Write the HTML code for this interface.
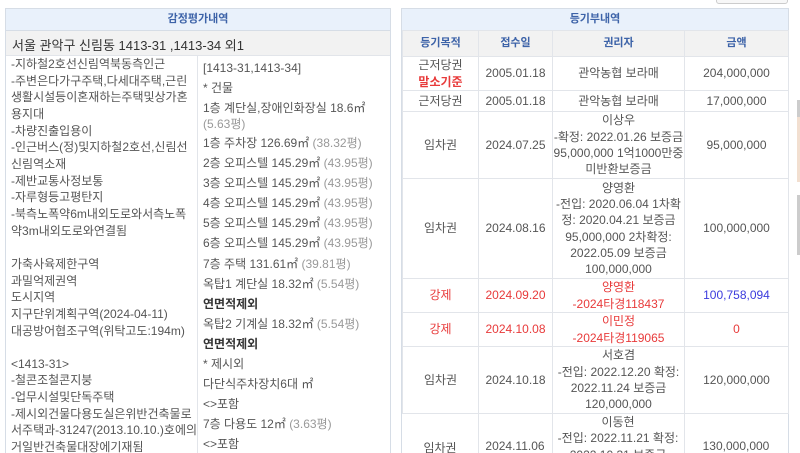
<!DOCTYPE html>
<html style="width:800px;height:453px;overflow:hidden"><head><meta charset="utf-8"><style>
*{margin:0;padding:0;box-sizing:border-box}
body{width:800px;height:453px;overflow:hidden;background:#fff;font-family:"Liberation Sans","Noto Sans CJK KR",sans-serif;font-size:12px;color:#555;position:relative}
.a{position:absolute;white-space:nowrap}
.box{position:absolute;border:1px solid #d6dde6;border-bottom:none}
.tt{position:absolute;background:#e9f1fb;color:#3d63a8;font-weight:bold;text-align:center;font-size:11px;line-height:21px;border-bottom:1px solid #d6dde6}
.g{color:#999}
.wrap{position:absolute;left:0;top:0;width:800px;height:453px;overflow:hidden}
table{position:absolute;left:402px;top:30px;width:386px;border-collapse:collapse;table-layout:fixed}
td,th{border:1px solid #e2e5ea;text-align:center;vertical-align:middle;line-height:16.3px;font-weight:normal;color:#555;padding:0}
th{background:#f2f2f2;color:#3d63a8;font-weight:bold;font-size:11px;height:26px}
.r{color:#e83a3a}
</style></head><body><div class="wrap">
<div style="position:absolute;left:716px;top:-4px;width:72px;height:8px;border:1px solid #ccc;border-radius:3px;background:#f7f7f7"></div>
<div style="position:absolute;left:797px;top:100px;width:3px;height:20px;background:#ccc"></div>
<div style="position:absolute;left:797px;top:117px;width:3px;height:65px;background:#f2dfd0"></div>
<div style="position:absolute;left:797px;top:195px;width:3px;height:60px;background:#ccc"></div>

<div class="box" style="left:5px;top:8px;width:386px;height:445px"></div>
<div class="tt" style="left:6px;top:9px;width:384px">감정평가내역</div>
<div class="a" style="left:6px;top:31px;width:384px;height:25px;background:#f2f2f2;border-bottom:1px solid #e2e5ea"></div>
<div class="a" style="left:12px;top:35px;font-size:13px;color:#333">서울 관악구 신림동 1413-31 ,1413-34 외1</div>
<div style="position:absolute;left:197px;top:56px;width:1px;height:397px;background:#e2e5ea"></div>
<div class="a" style="left:11px;top:56px;line-height:16.65px">-지하철2호선신림역북동측인근<br>-주변은다가구주택,다세대주택,근린<br>생활시설등이혼재하는주택및상가혼<br>용지대<br>-차량진출입용이<br>-인근버스(정)및지하철2호선,신림선<br>신림역소재<br>-제반교통사정보통<br>-자루형등고평탄지<br>-북측노폭약6m내외도로와서측노폭<br>약3m내외도로와연결됨<br><br>가축사육제한구역<br>과밀억제권역<br>도시지역<br>지구단위계획구역(2024-04-11)<br>대공방어협조구역(위탁고도:194m)<br><br>&lt;1413-31&gt;<br>-철콘조철콘지붕<br>-업무시설및단독주택<br>-제시외건물다용도실은위반건축물로<br>서주택과-31247(2013.10.10.)호에의<br>거일반건축물대장에기재됨</div>
<div class="a" style="left:203px;top:58px;line-height:20.1px">[1413-31,1413-34]<br>* 건물<br>1층 계단실,장애인화장실 18.6㎡</div>
<div class="a g" style="left:203px;top:115px">(5.63평)</div>
<div class="a" style="left:203px;top:133px;line-height:20.1px">1층 주차장 126.69㎡ <span class="g">(38.32평)</span><br>2층 오피스텔 145.29㎡ <span class="g">(43.95평)</span><br>3층 오피스텔 145.29㎡ <span class="g">(43.95평)</span><br>4층 오피스텔 145.29㎡ <span class="g">(43.95평)</span><br>5층 오피스텔 145.29㎡ <span class="g">(43.95평)</span><br>6층 오피스텔 145.29㎡ <span class="g">(43.95평)</span><br>7층 주택 131.61㎡ <span class="g">(39.81평)</span><br>옥탑1 계단실 18.32㎡ <span class="g">(5.54평)</span><br><b style="color:#333">연면적제외</b><br>옥탑2 기계실 18.32㎡ <span class="g">(5.54평)</span><br><b style="color:#333">연면적제외</b><br>* 제시외<br>다단식주차장치6대 ㎡<br>&lt;&gt;포함<br>7층 다용도 12㎡ <span class="g">(3.63평)</span><br>&lt;&gt;포함</div>

<div class="box" style="left:401px;top:8px;width:388px;height:445px"></div>
<div class="tt" style="left:402px;top:9px;width:386px">등기부내역</div>
<table>
<colgroup><col style="width:76px"><col style="width:74px"><col style="width:132px"><col style="width:104px"></colgroup>
<tr><th>등기목적</th><th>접수일</th><th>권리자</th><th>금액</th></tr>
<tr style="height:34px"><td>근저당권<br><span class="r" style="font-weight:bold">말소기준</span></td><td>2005.01.18</td><td>관악농협 보라매</td><td>204,000,000</td></tr>
<tr style="height:21px"><td>근저당권</td><td>2005.01.18</td><td>관악농협 보라매</td><td>17,000,000</td></tr>
<tr style="height:67px"><td>임차권</td><td>2024.07.25</td><td>이상우<br>-확정: 2022.01.26 보증금<br>95,000,000 1억1000만중<br>미반환보증금</td><td>95,000,000</td></tr>
<tr style="height:100px"><td>임차권</td><td>2024.08.16</td><td>양영환<br>-전입: 2020.06.04 1차확<br>정: 2020.04.21 보증금<br>95,000,000 2차확정:<br>2022.05.09 보증금<br>100,000,000</td><td>100,000,000</td></tr>
<tr style="height:34px"><td class="r">강제</td><td class="r">2024.09.20</td><td class="r">양영환<br>-2024타경118437</td><td style="color:#3b3bdd">100,758,094</td></tr>
<tr style="height:34px"><td class="r">강제</td><td class="r">2024.10.08</td><td class="r">이민정<br>-2024타경119065</td><td class="r">0</td></tr>
<tr style="height:67px"><td>임차권</td><td>2024.10.18</td><td>서호겸<br>-전입: 2022.12.20 확정:<br>2022.11.24 보증금<br>120,000,000</td><td>120,000,000</td></tr>
</table>
<div class="a" style="left:402px;top:414px;width:386px;height:39px;overflow:hidden">
<div style="position:absolute;left:76px;top:0;width:1px;height:39px;background:#e2e5ea"></div>
<div style="position:absolute;left:150px;top:0;width:1px;height:39px;background:#e2e5ea"></div>
<div style="position:absolute;left:282px;top:0;width:1px;height:39px;background:#e2e5ea"></div>
<div style="position:absolute;left:0;top:25px;width:76px;text-align:center">임차권</div>
<div style="position:absolute;left:76px;top:25px;width:74px;text-align:center">2024.11.06</div>
<div style="position:absolute;left:150px;top:0;width:132px;text-align:center;line-height:16.3px">이동현<br>-전입: 2022.11.21 확정:<br>2022.10.31 보증금</div>
<div style="position:absolute;left:282px;top:25px;width:104px;text-align:center">130,000,000</div>
</div>
</div></body></html>
